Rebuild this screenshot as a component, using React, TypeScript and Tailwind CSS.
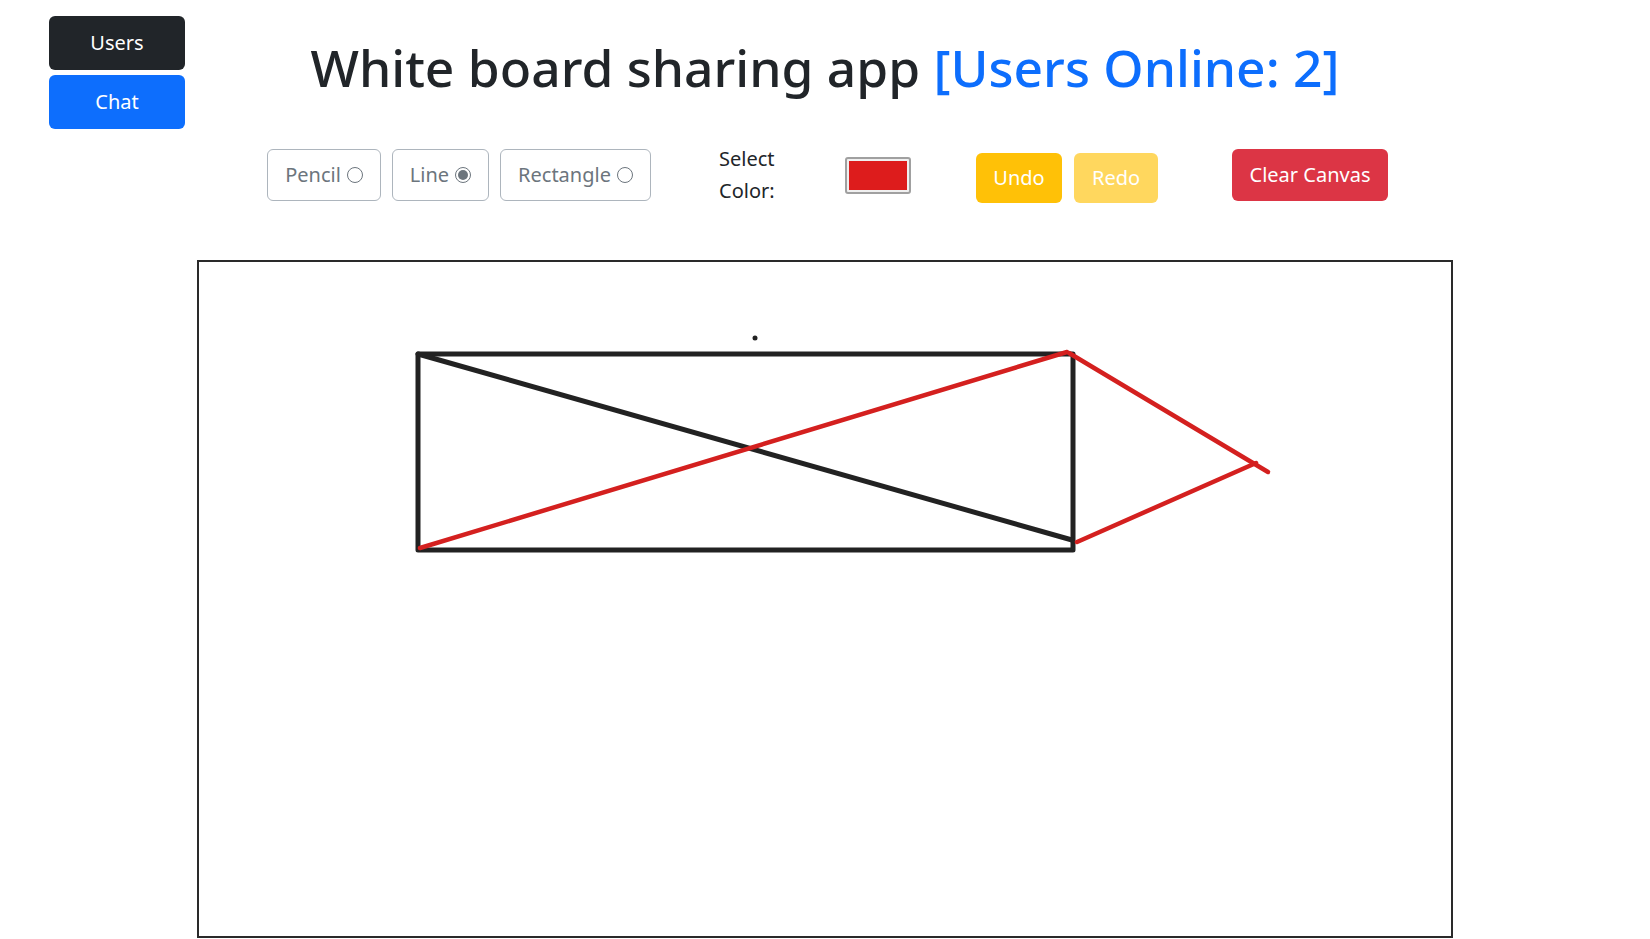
import React, { useState } from 'react';

const FONT = { fontFamily: '"Noto Sans", "Open Sans", Arial, sans-serif' };

type Tool = 'pencil' | 'line' | 'rect';

const Radio: React.FC<{ checked: boolean }> = ({ checked }) => (
  <span className="ml-[6px] inline-flex h-[16px] w-[16px] items-center justify-center rounded-full border border-[#6c757d]">
    {checked && <span className="h-[10px] w-[10px] rounded-full bg-[#6c757d]" />}
  </span>
);

const ToolButton: React.FC<{ label: string; checked: boolean; width: string; onClick: () => void }> = ({ label, checked, width, onClick }) => (
  <button
    onClick={onClick}
    className={`flex h-[52px] ${width} items-center justify-center rounded-md border border-[#adb5bd] text-[20px] text-[#6c757d]`}
  >
    {label}
    <Radio checked={checked} />
  </button>
);

const App: React.FC = () => {
  const [tool, setTool] = useState<Tool>('line');

  return (
    <div className="relative min-h-screen bg-white text-[#212529]" style={FONT}>
      {/* floating side buttons */}
      <div className="absolute left-[49px] top-[16px] flex flex-col gap-[5px]">
        <button className="h-[54px] w-[136px] rounded-md bg-[#212529] text-[20px] text-white">Users</button>
        <button className="h-[54px] w-[136px] rounded-md bg-[#0d6efd] text-[20px] text-white">Chat</button>
      </div>

      <h1 className="pt-[31px] text-center text-[51.5px] font-medium leading-[72px]">
        White board sharing app <span className="text-[#0d6efd]">[Users Online: 2]</span>
      </h1>

      {/* toolbar */}
      <div className="mt-[40px] flex items-center pl-[267px]">
        <div className="flex gap-[11px]">
          <ToolButton label="Pencil" checked={tool === 'pencil'} width="w-[114px]" onClick={() => setTool('pencil')} />
          <ToolButton label="Line" checked={tool === 'line'} width="w-[97px]" onClick={() => setTool('line')} />
          <ToolButton label="Rectangle" checked={tool === 'rect'} width="w-[151px]" onClick={() => setTool('rect')} />
        </div>
        <div className="ml-[68px] w-[60px] text-[20px] leading-[32px]">
          Select
          <br />
          Color:
        </div>
        <div className="ml-[66px] flex h-[37px] w-[66px] items-center justify-center rounded-[3px] border-2 border-[#a0a0a0] bg-[#f0f0f0] p-[2px]">
          <div className="h-full w-full bg-[#dd1c1c]" />
        </div>
        <div className="ml-[65px] flex gap-[12px] pt-[6px]">
          <button className="h-[50px] w-[86px] rounded-md bg-[#ffc107] text-[20px] text-white">Undo</button>
          <button className="h-[50px] w-[84px] rounded-md bg-[#ffd75e] text-[20px] text-white">Redo</button>
        </div>
        <button className="ml-[74px] h-[52px] w-[156px] rounded-md bg-[#dc3545] text-[20px] text-white">Clear Canvas</button>
      </div>

      {/* drawing canvas */}
      <div className="mx-auto mt-[53px] h-[678px] w-[1256px] border-2 border-[#2a2a2a] bg-white">
        <svg width="1252" height="674" viewBox="0 0 1252 674" fill="none" strokeLinecap="round" strokeLinejoin="round">
          <rect x="219" y="92" width="655" height="196" stroke="#222" strokeWidth="5" />
          <line x1="219" y1="92" x2="873" y2="278" stroke="#222" strokeWidth="5" />
          <line x1="221" y1="286" x2="868" y2="90" stroke="#d4201f" strokeWidth="4.5" />
          <line x1="870" y1="91" x2="1069" y2="210" stroke="#d4201f" strokeWidth="4.5" />
          <line x1="1057" y1="201" x2="878" y2="280" stroke="#d4201f" strokeWidth="4.5" />
          <circle cx="556" cy="76" r="2.5" fill="#222" />
        </svg>
      </div>
    </div>
  );
};

export default App;
